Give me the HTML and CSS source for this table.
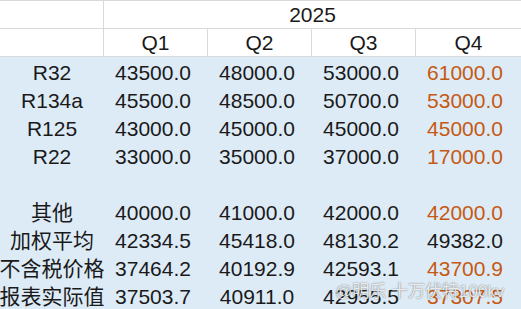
FILE: index.html
```html
<!DOCTYPE html>
<html>
<head>
  <link rel="stylesheet" href="styles.css">
</head>
<body>
  <div id="sheet">
    <!-- header -->
    <div class="row head">
      <div class="cell label"></div>
      <div class="cell year">2025</div>
    </div>
    <div class="row head">
      <div class="cell label"></div>
      <div class="cell">Q1</div>
      <div class="cell">Q2</div>
      <div class="cell">Q3</div>
      <div class="cell last">Q4</div>
    </div>
    <!-- data -->
    <div id="body">
      <div class="row">
        <div class="cell label">R32</div>
        <div class="cell num">43500.0</div>
        <div class="cell num">48000.0</div>
        <div class="cell num">53000.0</div>
        <div class="cell num last orange">61000.0</div>
      </div>
      <div class="row">
        <div class="cell label">R134a</div>
        <div class="cell num">45500.0</div>
        <div class="cell num">48500.0</div>
        <div class="cell num">50700.0</div>
        <div class="cell num last orange">53000.0</div>
      </div>
      <div class="row">
        <div class="cell label">R125</div>
        <div class="cell num">43000.0</div>
        <div class="cell num">45000.0</div>
        <div class="cell num">45000.0</div>
        <div class="cell num last orange">45000.0</div>
      </div>
      <div class="row">
        <div class="cell label">R22</div>
        <div class="cell num">33000.0</div>
        <div class="cell num">35000.0</div>
        <div class="cell num">37000.0</div>
        <div class="cell num last orange">17000.0</div>
      </div>
      <div class="row"></div>
      <div class="row">
        <div class="cell label">其他</div>
        <div class="cell num">40000.0</div>
        <div class="cell num">41000.0</div>
        <div class="cell num">42000.0</div>
        <div class="cell num last orange">42000.0</div>
      </div>
      <div class="row">
        <div class="cell label">加权平均</div>
        <div class="cell num">42334.5</div>
        <div class="cell num">45418.0</div>
        <div class="cell num">48130.2</div>
        <div class="cell num last">49382.0</div>
      </div>
      <div class="row">
        <div class="cell label">不含税价格</div>
        <div class="cell num">37464.2</div>
        <div class="cell num">40192.9</div>
        <div class="cell num">42593.1</div>
        <div class="cell num last orange">43700.9</div>
      </div>
      <div class="row">
        <div class="cell label">报表实际值</div>
        <div class="cell num">37503.7</div>
        <div class="cell num">40911.0</div>
        <div class="cell num">42955.5</div>
        <div class="cell num last orange">37307.5</div>
      </div>
      <div id="watermark">@明乐 十万伏特100kv</div>
    </div>
  </div>
</body>
</html>
```
FILE: styles.css
```css
* {
  margin: 0;
  padding: 0;
  box-sizing: border-box;
}

body {
  background-color: white;
  font-family: "Liberation Sans", "Noto Sans CJK SC", sans-serif;
  font-size: 21px;
  color: #1a1a1a;
  overflow: hidden;
}

#sheet {
  width: 521px;
  border-top: 1px solid #d9d9d9;
}

.row {
  display: flex;
  height: 28px;
}

.head {
  border-bottom: 1px solid #d9d9d9;
}

.cell {
  width: 104px;
  flex-shrink: 0;
  display: flex;
  align-items: flex-end;
  justify-content: center;
  line-height: 24px;
  white-space: nowrap;
}

.head .cell {
  border-right: 1px solid #d9d9d9;
  padding-bottom: 1px;
}

.head .last {
  border-right: none;
  width: 105px;
}

.year {
  width: 417px !important;
  border-right: none !important;
}

#body {
  position: relative;
  background-color: #ddebf7;
  height: 252px;
}

.label {
  letter-spacing: 0;
}

.num {
  padding-right: 6px;
}

.orange {
  color: #c65911;
}

#watermark {
  position: absolute;
  left: 335px;
  top: 225px;
  font-size: 17px;
  line-height: 20px;
  color: rgba(255, 255, 255, 0.85);
  text-shadow: 0 0 1px rgba(60, 60, 60, 0.6), 0 0 2px rgba(60, 60, 60, 0.3);
  white-space: nowrap;
}
```
